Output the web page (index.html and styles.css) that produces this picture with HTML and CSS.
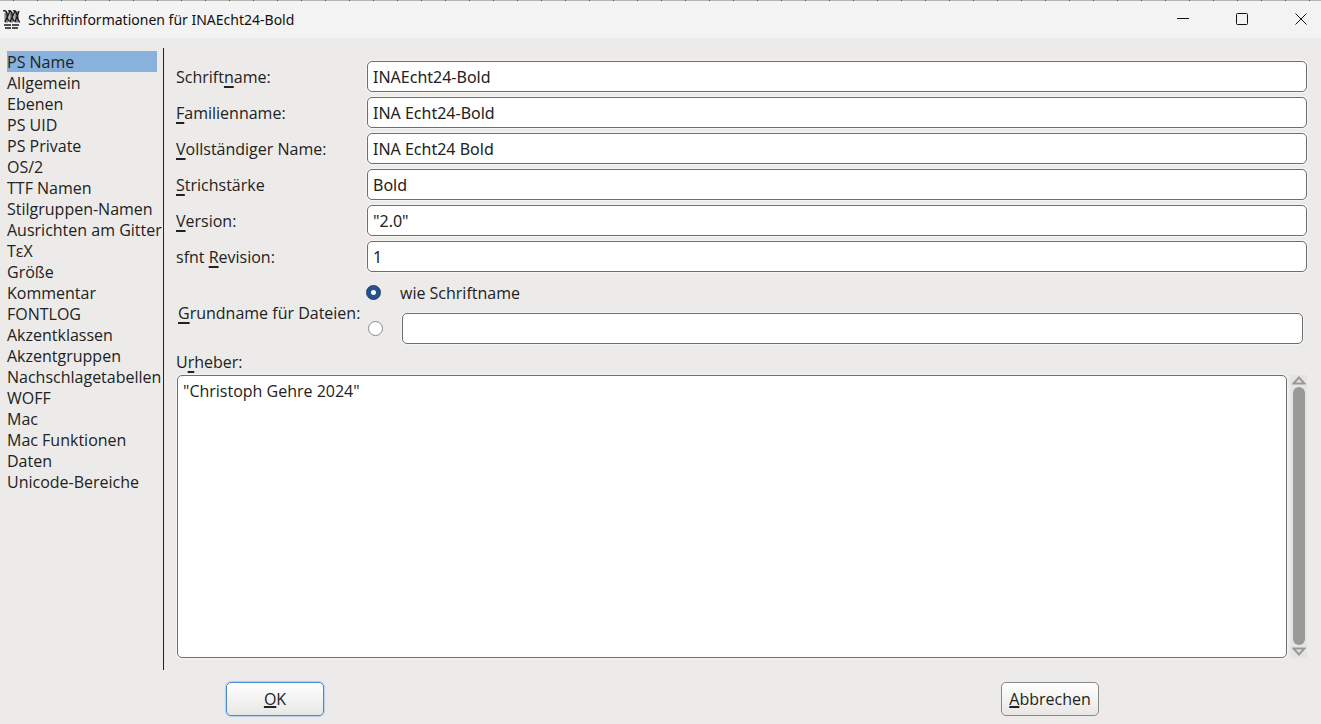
FILE: index.html
```html
<!DOCTYPE html>
<html lang="de">
<head>
    <meta charset="UTF-8">
    <meta name="viewport" content="width=device-width, initial-scale=1.0">
    <title>Schriftinformationen für INAEcht24-Bold</title>
    <link rel="stylesheet" href="styles.css">
</head>
<body>
<div class="edge"></div>
<header class="titlebar">
    <svg class="app-icon" width="18" height="20" viewBox="0 0 18 20" fill="none" stroke="#1a1a1a">
        <path d="M2 3h3v9H2zM7 3h3v9H7zM12 2h3v10h-3z" fill="#999" stroke="#777"/>
        <path d="M0 1c3-1 4 1 4 4s1 7 4 6M5 1c3-1 4 1 4 4s1 7 4 6M10 1c3-1 3 1 4 4s1 7 3 7M7 1L2 12M12 1L7 12M16 1l-4 11" stroke-width="1.300"/>
        <path d="M1 15h7M9 15h7M2 18h6M9 18h6" stroke-width="1.500"/>
    </svg>
    <h1 class="title">Schriftinformationen für INAEcht24-Bold</h1>
    <div class="window-buttons">
        <button type="button" aria-label="Minimieren">
            <svg width="14" height="14" viewBox="0 0 14 14"><path d="M1 6.500h12"/></svg>
        </button>
        <button type="button" aria-label="Maximieren">
            <svg width="14" height="14" viewBox="0 0 14 14"><rect x="1.500" y="1.500" width="11" height="11" rx="1"/></svg>
        </button>
        <button type="button" aria-label="Schließen">
            <svg width="14" height="14" viewBox="0 0 14 14"><path d="M1.500 1.500l11 11M12.500 1.500l-11 11"/></svg>
        </button>
    </div>
</header>

<form class="dialog">
    <div class="content">
        <nav class="sidebar">
            <ul>
                <li><a href="#psname" class="active">PS Name</a></li>
                <li><a href="#allgemein">Allgemein</a></li>
                <li><a href="#ebenen">Ebenen</a></li>
                <li><a href="#psuid">PS UID</a></li>
                <li><a href="#psprivate">PS Private</a></li>
                <li><a href="#os2">OS/2</a></li>
                <li><a href="#ttf">TTF Namen</a></li>
                <li><a href="#stilgruppen">Stilgruppen-Namen</a></li>
                <li><a href="#gitter">Ausrichten am Gitter</a></li>
                <li><a href="#tex">TεX</a></li>
                <li><a href="#groesse">Größe</a></li>
                <li><a href="#kommentar">Kommentar</a></li>
                <li><a href="#fontlog">FONTLOG</a></li>
                <li><a href="#akzentklassen">Akzentklassen</a></li>
                <li><a href="#akzentgruppen">Akzentgruppen</a></li>
                <li><a href="#nachschlagetabellen">Nachschlagetabellen</a></li>
                <li><a href="#woff">WOFF</a></li>
                <li><a href="#mac">Mac</a></li>
                <li><a href="#macfunktionen">Mac Funktionen</a></li>
                <li><a href="#daten">Daten</a></li>
                <li><a href="#unicode">Unicode-Bereiche</a></li>
            </ul>
        </nav>

        <main class="panel" id="psname">
            <div class="fields">
                <label for="fontname">Schrift<u>n</u>ame:</label>
                <input type="text" id="fontname" value="INAEcht24-Bold">
                <label for="family"><u>F</u>amilienname:</label>
                <input type="text" id="family" value="INA Echt24-Bold">
                <label for="fullname"><u>V</u>ollständiger Name:</label>
                <input type="text" id="fullname" value="INA Echt24 Bold">
                <label for="weight"><u>S</u>trichstärke</label>
                <input type="text" id="weight" value="Bold">
                <label for="version"><u>V</u>ersion:</label>
                <input type="text" id="version" value="&quot;2.0&quot;">
                <label for="revision">sfnt <u>R</u>evision:</label>
                <input type="text" id="revision" value="1">
            </div>

            <div class="basename">
                <label class="basename-label" for="basename"><u>G</u>rundname für Dateien:</label>
                <div class="basename-options">
                    <div class="option">
                        <input type="radio" name="base" id="same" checked>
                        <label for="same">wie Schriftname</label>
                    </div>
                    <div class="option custom">
                        <input type="radio" name="base" id="own" aria-label="Eigener Grundname">
                        <input type="text" id="basename">
                    </div>
                </div>
            </div>

            <label class="copyright-label" for="copyright">U<u>r</u>heber:</label>
            <div class="copyright">
                <textarea id="copyright">"Christoph Gehre 2024"</textarea>
                <div class="scrollbar">
                    <svg width="14" height="9" viewBox="0 0 14 9"><path d="M1.500 7.500L7 1.500l5.500 6z"/></svg>
                    <div class="thumb"></div>
                    <svg width="14" height="9" viewBox="0 0 14 9"><path d="M1.500 1.500L7 7.500l5.500-6z"/></svg>
                </div>
            </div>
        </main>
    </div>

    <footer class="actions">
        <button type="submit" class="btn default"><u>O</u>K</button>
        <button type="button" class="btn"><u>A</u>bbrechen</button>
    </footer>
</form>
</body>
</html>
```
FILE: styles.css
```css
* {
    box-sizing: border-box;
}

body {
    margin: 0;
    min-height: 100vh;
    display: flex;
    flex-direction: column;
    background: #ecebe9;
    color: #222;
    font-family: "Open Sans", "Noto Sans", sans-serif;
    font-size: 16px;
    line-height: 22px;
}

input, textarea, button {
    font: inherit;
    color: inherit;
}

u {
    text-decoration: underline 2px;
    text-underline-offset: 3px;
    text-decoration-skip-ink: none;
}

/* window edge */
.edge {
    height: 1px;
    background: repeating-linear-gradient(90deg, #b5b5b5 0 13px, #555 13px 14px, #b5b5b5 14px 24px);
}

/* title bar */
.titlebar {
    display: flex;
    align-items: center;
    height: 37px;
    padding-left: 3px;
    background: #f3f3f3;
}

.title {
    flex: 1;
    margin: 0 0 0 7px;
    color: #111;
    font-family: "Noto Sans", sans-serif;
    font-size: 14px;
    font-weight: normal;
}

.window-buttons {
    display: flex;
    align-items: center;
    padding-right: 13px;
    gap: 45px;
}

.window-buttons button {
    display: flex;
    padding: 0 0 1px;
    border: none;
    background: none;
}

.window-buttons svg {
    fill: none;
    stroke: #111;
    stroke-width: 1;
}

/* dialog */
.dialog {
    flex: 1;
    display: flex;
    flex-direction: column;
}

.content {
    flex: 1;
    display: flex;
    padding-top: 10px;
}

.sidebar {
    width: 164px;
    padding: 3px 0 0 7px;
    border-right: 1px solid #222;
    white-space: nowrap;
}

.sidebar ul {
    margin: 0;
    padding: 0;
    list-style: none;
}

.sidebar a {
    display: block;
    width: 150px;
    height: 21px;
    line-height: 23px;
    color: inherit;
    text-decoration: none;
}

.sidebar a.active {
    background: #88b1de;
}

.panel {
    flex: 1;
    display: flex;
    flex-direction: column;
    padding: 13px 14px 12px 12px;
}

.fields {
    display: grid;
    grid-template-columns: 186px 1fr;
    align-items: center;
    gap: 5px;
}

input[type="text"], textarea {
    width: 100%;
    height: 31px;
    margin: 0;
    padding: 0 5px;
    border: 1px solid #6e6e6e;
    border-radius: 5px;
    background: #fff;
    font-family: "Noto Sans", sans-serif;
    outline: none;
    box-shadow: 0 0 1px 1px #f6f5f4;
}

/* file name choice */
.basename {
    display: flex;
    align-items: center;
    margin-top: 5px;
    padding-right: 4px;
}

.basename-label {
    width: 190px;
    padding: 4px 0 0 2px;
}

.basename-options {
    flex: 1;
}

.option {
    display: flex;
    align-items: center;
    height: 31px;
    gap: 19px;
}

.option.custom {
    margin-top: 5px;
    padding-left: 2px;
}

input[type="radio"] {
    appearance: none;
    flex: none;
    width: 15px;
    height: 15px;
    margin: 0;
    border: 1px solid #888;
    border-radius: 50%;
    background: #fff;
}

input[type="radio"]:checked {
    border-color: #1b3a66;
    background: radial-gradient(circle, #fff 2px, #27528f 3px);
}

/* copyright text */
.copyright-label {
    margin: 7px 0 2px;
}

.copyright {
    flex: 1;
    display: flex;
    gap: 3px;
    padding-left: 1px;
}

.copyright textarea {
    flex: 1;
    height: auto;
    padding-top: 4px;
    font-family: inherit;
    resize: none;
}

.scrollbar {
    display: flex;
    flex-direction: column;
    align-items: center;
    width: 17px;
    gap: 2px;
    padding: 1px 0 2px;
    background: #e5e4e2;
}

.scrollbar svg {
    fill: none;
    stroke: #999;
    stroke-width: 2;
}

.thumb {
    flex: 1;
    width: 12px;
    border-radius: 6px;
    background: #999a96;
}

.actions {
    display: flex;
    justify-content: space-between;
    padding: 12px 222px 8px 226px;
}

.btn {
    width: 98px;
    height: 34px;
    padding: 0;
    border: 1px solid #888;
    border-radius: 5px;
    background: linear-gradient(#fff, #e8e7e5);
}

.btn.default {
    border-color: #4a88d0;
    box-shadow: 0 0 1px 1px #b8d0ec;
}

.btn u {
    text-underline-offset: 1px;
}
```
